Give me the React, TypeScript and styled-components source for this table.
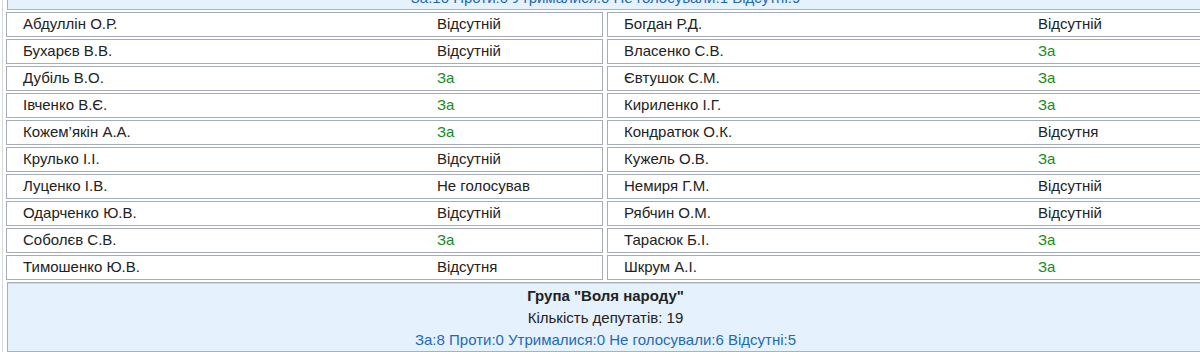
import styled, { createGlobalStyle } from "styled-components";

type Vote = "for" | "absent" | "none";

interface Deputy {
  name: string;
  status: string;
  vote: Vote;
}

const left: Deputy[] = [
  { name: "Абдуллін О.Р.", status: "Відсутній", vote: "absent" },
  { name: "Бухарєв В.В.", status: "Відсутній", vote: "absent" },
  { name: "Дубіль В.О.", status: "За", vote: "for" },
  { name: "Івченко В.Є.", status: "За", vote: "for" },
  { name: "Кожем’якін А.А.", status: "За", vote: "for" },
  { name: "Крулько І.І.", status: "Відсутній", vote: "absent" },
  { name: "Луценко І.В.", status: "Не голосував", vote: "none" },
  { name: "Одарченко Ю.В.", status: "Відсутній", vote: "absent" },
  { name: "Соболєв С.В.", status: "За", vote: "for" },
  { name: "Тимошенко Ю.В.", status: "Відсутня", vote: "absent" },
];

const right: Deputy[] = [
  { name: "Богдан Р.Д.", status: "Відсутній", vote: "absent" },
  { name: "Власенко С.В.", status: "За", vote: "for" },
  { name: "Євтушок С.М.", status: "За", vote: "for" },
  { name: "Кириленко І.Г.", status: "За", vote: "for" },
  { name: "Кондратюк О.К.", status: "Відсутня", vote: "absent" },
  { name: "Кужель О.В.", status: "За", vote: "for" },
  { name: "Немиря Г.М.", status: "Відсутній", vote: "absent" },
  { name: "Рябчин О.М.", status: "Відсутній", vote: "absent" },
  { name: "Тарасюк Б.І.", status: "За", vote: "for" },
  { name: "Шкрум А.І.", status: "За", vote: "for" },
];

// interleave so the grid reads left/right per row
const rows: Deputy[] = left.flatMap((d, i) => [d, right[i]]);

const GlobalStyle = createGlobalStyle`
  html, body {
    margin: 0;
    padding: 0;
    background: #fff;
    overflow: hidden;
  }
  body {
    font-family: "Liberation Sans", Arial, sans-serif;
    font-size: 15px;
    color: #222;
  }
`;

const Page = styled.div`
  width: 1198px;
  margin-left: 2px;
  margin-top: -60px;
  padding-left: 3px;
  border-left: 1px solid #d4d9e0;
`;

const Summary = styled.div`
  margin-left: 1px;
  padding: 2px 0 0;
  background: #e5f1fc;
  border: 1px solid #a9b1bf;
  box-shadow: inset 0 1px 0 #c8d6e6;
  text-align: center;
  line-height: 22px;
`;

const GroupTitle = styled.div`
  font-weight: bold;
  color: #222;
`;

const Count = styled.div`
  color: #222;
`;

const Totals = styled.div`
  color: #1f6ab4;
`;

const Grid = styled.div`
  display: grid;
  grid-template-columns: 597px 597px;
  column-gap: 4px;
  row-gap: 2px;
  margin: 2px 0;
`;

const Cell = styled.div`
  display: grid;
  grid-template-columns: 414px 1fr;
  height: 25px;
  box-sizing: border-box;
  padding-left: 16px;
  border: 1px solid #a5adbb;
  background: #fff;
  align-items: start;
  line-height: 22px;
`;

const Name = styled.span`
  color: #222;
  white-space: nowrap;
`;

const Status = styled.span<{ $vote: Vote }>`
  color: ${({ $vote }) => ($vote === "for" ? "#1a8a1a" : "#222")};
  white-space: nowrap;
`;

const GroupSummary = ({
  title,
  count,
  totals,
}: {
  title: string;
  count: number;
  totals: string;
}) => (
  <Summary>
    <GroupTitle>{title}</GroupTitle>
    <Count>Кількість депутатів: {count}</Count>
    <Totals>{totals}</Totals>
  </Summary>
);

export default function App() {
  return (
    <>
      <GlobalStyle />
      <Page>
        <GroupSummary
          title={'Група "Батьківщина"'}
          count={20}
          totals="За:10 Проти:0 Утрималися:0 Не голосували:1 Відсутні:9"
        />
        <Grid>
          {rows.map((d) => (
            <Cell key={d.name}>
              <Name>{d.name}</Name>
              <Status $vote={d.vote}>{d.status}</Status>
            </Cell>
          ))}
        </Grid>
        <GroupSummary
          title={'Група "Воля народу"'}
          count={19}
          totals="За:8 Проти:0 Утрималися:0 Не голосували:6 Відсутні:5"
        />
      </Page>
    </>
  );
}
